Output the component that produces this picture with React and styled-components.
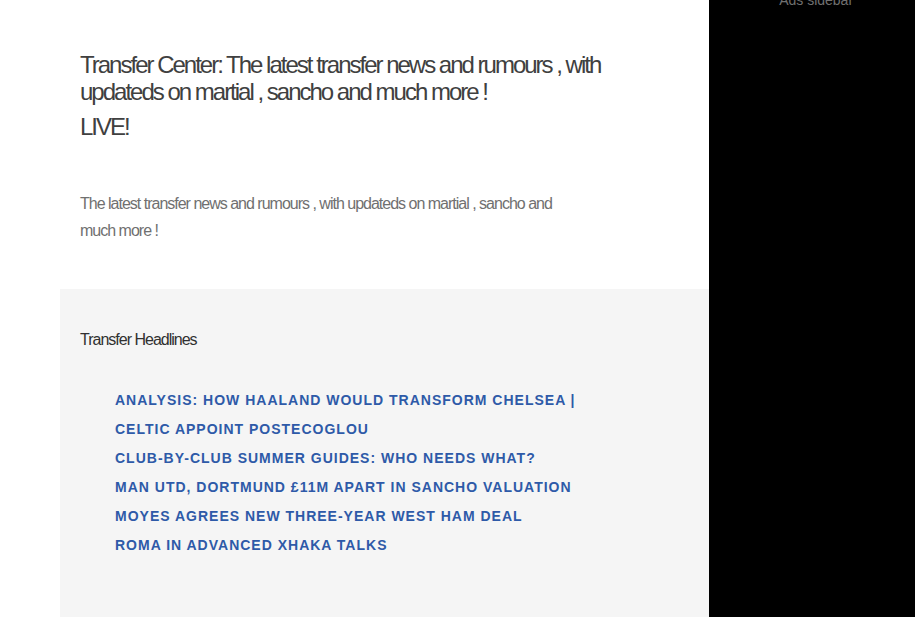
import React from "react";
import styled, { createGlobalStyle } from "styled-components";

const GlobalStyle = createGlobalStyle`
  * { box-sizing: border-box; }
  body {
    margin: 0;
    background: #fff;
    color: #404040;
    font-family: "Liberation Sans", Arial, sans-serif;
  }
`;

const Page = styled.div`
  display: grid;
  grid-template-columns: minmax(0, 31fr) minmax(0, 9fr);
  min-height: 100vh;
`;

const Main = styled.main`
  display: flex;
  flex-direction: column;
  padding-left: 60px;
`;

const Intro = styled.header`
  padding: 51px 100px 45px 20px;
`;

const Title = styled.h1`
  margin: 0 0 8px;
  font-size: 24px;
  line-height: 27px;
  font-weight: 400;
  letter-spacing: -2px;
`;

const Live = styled.h2`
  margin: 0 0 50px;
  font-size: 24px;
  line-height: 27px;
  font-weight: 400;
  letter-spacing: -2px;
`;

const Summary = styled.p`
  max-width: 500px;
  margin: 0;
  color: #707070;
  font-size: 16px;
  line-height: 27px;
  letter-spacing: -1px;
`;

const Headlines = styled.section`
  flex: 1;
  padding: 37px 20px;
  background: #f5f5f5;
`;

const SectionTitle = styled.h3`
  margin: 0 0 33px;
  color: #303030;
  font-size: 16px;
  line-height: 27px;
  font-weight: 400;
  letter-spacing: -1px;
`;

const List = styled.ul`
  margin: 0;
  padding: 0 0 0 35px;
  list-style: none;
  font-size: 14px;
  font-weight: 700;
  line-height: 29px;
`;

const HeadlineLink = styled.a`
  color: #2e5aa8;
  letter-spacing: 1px;
  text-decoration: none;
  text-transform: uppercase;
`;

const Sidebar = styled.aside`
  overflow: hidden;
  padding-left: 70px;
  background: #000;
`;

const SidebarLabel = styled.p`
  margin: 0;
  color: #707070;
  font-size: 14px;
  line-height: 0;
`;

const stories = [
  "Analysis: How Haaland would transform Chelsea |",
  "Celtic appoint Postecoglou",
  "Club-by-club summer guides: Who needs what?",
  "Man Utd, Dortmund £11m apart in Sancho valuation",
  "Moyes agrees new three-year West Ham deal",
  "Roma in advanced Xhaka talks",
];

export default function App() {
  return (
    <>
      <GlobalStyle />
      <Page>
        <Main>
          <Intro>
            <Title>
              Transfer Center: The latest transfer news and rumours , with
              updateds on martial , sancho and much more !
            </Title>
            <Live>LIVE!</Live>
            <Summary>
              The latest transfer news and rumours , with updateds on martial ,
              sancho and much more !
            </Summary>
          </Intro>
          <Headlines>
            <SectionTitle>Transfer Headlines</SectionTitle>
            <List>
              {stories.map((story) => (
                <li key={story}>
                  <HeadlineLink href="#">{story}</HeadlineLink>
                </li>
              ))}
            </List>
          </Headlines>
        </Main>
        <Sidebar>
          <SidebarLabel>Ads sidebar</SidebarLabel>
        </Sidebar>
      </Page>
    </>
  );
}
